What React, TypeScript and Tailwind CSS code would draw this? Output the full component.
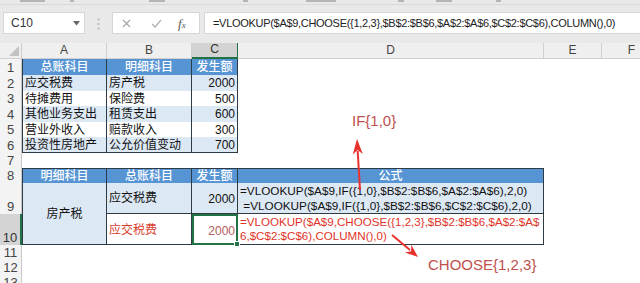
import React from "react";

const F = "font-['Liberation_Sans','Noto_Sans_CJK_SC',sans-serif]";

const colHdr = "flex items-end justify-center pb-[0px] bg-[#efefef] border-b border-r border-[#cfcfcf] text-[12px] leading-[15px] text-[#444]";
const rowHdr = "flex items-end justify-center bg-[#f3f3f3] border-r border-[#c8c8c8] text-[13px] leading-[15px] text-[#444]";
const blueHdr = "flex items-center justify-center bg-[#5694d4] text-white text-[12px] font-medium border-r border-[#2e3b45]";
const empty = "";

const topRows = [
  ["应交税费", "房产税", "2000"],
  ["待摊费用", "保险费", "500"],
  ["其他业务支出", "租赁支出", "600"],
  ["营业外收入", "赔款收入", "300"],
  ["投资性房地产", "公允价值变动", "700"],
];

function RowHead({ n, sel }: { n: number; sel?: boolean }) {
  return (
    <div className={sel ? "flex items-end justify-center bg-[#d4d4d4] border-r-2 border-[#217346] text-[13px] leading-[15px] text-[#333]" : rowHdr}>
      {n}
    </div>
  );
}

export default function App() {
  return (
    <div className={"relative w-[640px] h-[283px] overflow-hidden bg-white " + F}>
      {/* toolbar */}
      <div className="h-[43px] bg-[#e9e9e9] flex flex-col">
        <div className="h-[5px] border-b border-[#d9d9d9] flex items-start gap-0 relative">
          <div className="ml-[20px] mt-[0px] h-[2px] w-[25px] bg-[#b5b5b5]" />
          <div className="ml-[25px] h-[2px] w-[4px] bg-[#b5b5b5]" />
          <div className="ml-[75px] h-[2px] w-[16px] bg-[#b5b5b5]" />
          <div className="ml-[78px] h-[2px] w-[5px] bg-[#b5b5b5]" />
          <div className="ml-[58px] h-[2px] w-[30px] bg-[#b5b5b5]" />
          <div className="ml-[62px] h-[2px] w-[6px] bg-[#b5b5b5]" />
          <div className="ml-[32px] h-[2px] w-[16px] bg-[#b5b5b5]" />
          <div className="ml-[44px] h-[2px] w-[5px] bg-[#b5b5b5]" />
        </div>
        <div className="mt-[7px] h-[23px] flex">
          <div className="ml-[3px] w-[82px] h-[22px] bg-white border border-[#d6d6d6] flex items-center justify-between pl-[7px] pr-[4px]">
            <span className="text-[12px] text-[#333]">C10</span>
            <svg width="7" height="5" viewBox="0 0 7 5"><path d="M0 0 L7 0 L3.5 4.5 Z" fill="#666" /></svg>
          </div>
          <div className="w-[27px] flex items-center justify-center">
            <svg width="3" height="12" viewBox="0 0 3 12">
              <circle cx="1.5" cy="1.5" r="1" fill="#b0b0b0" />
              <circle cx="1.5" cy="6" r="1" fill="#b0b0b0" />
              <circle cx="1.5" cy="10.5" r="1" fill="#b0b0b0" />
            </svg>
          </div>
          <div className="w-[88px] h-[22px] bg-white border border-[#d6d6d6] flex items-center">
            <svg className="ml-[9px]" width="9" height="9" viewBox="0 0 9 9"><path d="M1 1 L8 8 M8 1 L1 8" stroke="#a8a8a8" strokeWidth="1.2" /></svg>
            <svg className="ml-[20px]" width="11" height="9" viewBox="0 0 11 9"><path d="M1 5 L4 8 L10 1" stroke="#b0b0b0" strokeWidth="1.2" fill="none" /></svg>
            <span className="ml-[16px] font-['Liberation_Serif',serif] italic text-[13px] text-[#555] leading-none">f<span className="text-[9px]">x</span></span>
          </div>
          <div className="ml-[4px] flex-1 h-[22px] bg-white border-y border-l border-[#d6d6d6] flex items-center pl-[8px]">
            <span className="text-[11px] tracking-[-0.3px] text-[#222] whitespace-nowrap">=VLOOKUP($A$9,CHOOSE({"{"}1,2,3{"}"},$B$2:$B$6,$A$2:$A$6,$C$2:$C$6),COLUMN(),0)</span>
          </div>
        </div>
      </div>

      {/* sheet grid */}
      <div className="w-[662px] grid grid-cols-[22px_85px_85px_46px_306px_58px_60px] grid-rows-[16px_16px_16px_15px_16px_15px_16px_15px_15px_31px_31px_15px_15px_15px] text-[12px] text-[#111]">
        {/* column headers */}
        <div className="relative bg-[#efefef] border-b border-r border-[#cfcfcf]">
          <svg className="absolute right-[2px] bottom-[2px]" width="10" height="10" viewBox="0 0 10 10"><path d="M10 0 L10 10 L0 10 Z" fill="#c2c2c2" /></svg>
        </div>
        <div className={colHdr}>A</div>
        <div className={colHdr}>B</div>
        <div className="flex items-end justify-center bg-[#d3d3d3] border-b-2 border-[#217346] border-r text-[12px] leading-[15px] text-[#333]">C</div>
        <div className={colHdr}>D</div>
        <div className={colHdr}>E</div>
        <div className={colHdr}>F</div>

        {/* row 1 */}
        <RowHead n={1} />
        <div className={blueHdr + " border-l"}>总账科目</div>
        <div className={blueHdr}>明细科目</div>
        <div className={blueHdr}>发生额</div>
        <div className={empty} />
        <div className={empty} />
        <div className={empty} />

        {topRows.map((r, i) => (
          <React.Fragment key={i}>
            <RowHead n={i + 2} />
            <div className={(i % 2 === 0 ? "bg-[#dde8f5] " : "bg-white ") + (i === 4 ? "border-b " : "") + "flex items-center pl-[2px] border-l border-r border-[#2e3b45] whitespace-nowrap"}>{r[0]}</div>
            <div className={(i % 2 === 0 ? "bg-[#dde8f5] " : "bg-white ") + (i === 4 ? "border-b " : "") + "flex items-center pl-[2px] border-r border-[#2e3b45] whitespace-nowrap"}>{r[1]}</div>
            <div className={(i % 2 === 0 ? "bg-[#dde8f5] " : "bg-white ") + (i === 4 ? "border-b " : "") + "flex items-center justify-end pr-[2px] border-r border-[#2e3b45]"}>{r[2]}</div>
            <div />
            <div />
            <div />
          </React.Fragment>
        ))}

        {/* row 7 */}
        <RowHead n={7} />
        <div />
        <div />
        <div />
        <div />
        <div />
        <div />

        {/* row 8 */}
        <RowHead n={8} />
        <div className={blueHdr + " border-l border-t"}>明细科目</div>
        <div className={blueHdr + " border-t"}>总账科目</div>
        <div className={blueHdr + " border-t"}>发生额</div>
        <div className={blueHdr + " border-t"}>公式</div>
        <div />
        <div />

        {/* row 9 */}
        <RowHead n={9} />
        <div className="row-span-2 bg-[#dde8f5] border-l border-r border-b border-[#2e3b45] flex items-center justify-center">房产税</div>
        <div className="bg-[#dde8f5] border-r border-b border-[#2e3b45] flex items-center pl-[2px]">应交税费</div>
        <div className="bg-[#dde8f5] border-r border-b border-[#2e3b45] flex items-center justify-end pr-[2px] pt-[2px]">2000</div>
        <div className="bg-[#dde8f5] border-r border-b border-[#2e3b45] flex flex-col pl-[2px] pt-[0px] text-[11.75px] leading-[15px] whitespace-pre">
          <span>=VLOOKUP($A$9,IF({"{"}1,0{"}"},$B$2:$B$6,$A$2:$A$6),2,0)</span>
          <span> =VLOOKUP($A$9,IF({"{"}1,0{"}"},$B$2:$B$6,$C$2:$C$6),2,0)</span>
        </div>
        <div />
        <div />

        {/* row 10 */}
        <RowHead n={10} sel />
        <div className="col-start-3 bg-white border-r border-b border-[#2e3b45] flex items-center pl-[2px] pt-[2px] text-[#d8402f]">应交税费</div>
        <div className="relative bg-white border-2 border-[#217346] flex items-center justify-end pr-[1px] pt-[2px] text-[#b45a5a]">
          2000
          <div className="absolute right-[-4px] bottom-[-4px] w-[6px] h-[6px] bg-[#217346] border border-white" />
        </div>
        <div className="bg-white border-r border-b border-[#2e3b45] flex flex-col pl-[2px] pt-[1px] text-[11.6px] leading-[14px] whitespace-pre text-[#de3328]">
          <span>=VLOOKUP($A$9,CHOOSE({"{"}1,2,3{"}"},$B$2:$B$6,$A$2:$A$</span>
          <span>6,$C$2:$C$6),COLUMN(),0)</span>
        </div>
        <div />
        <div />

        {[11, 12, 13].map((n) => (
          <React.Fragment key={n}>
            <RowHead n={n} />
            <div />
            <div />
            <div />
            <div />
            <div />
            <div />
          </React.Fragment>
        ))}
      </div>

      {/* annotations */}
      <div className="absolute left-[352px] top-[112px] text-[15px] leading-[18px] text-[#c0504d] font-light whitespace-nowrap">IF{"{"}1,0{"}"}</div>
      <div className="absolute left-[428px] top-[256px] text-[15px] leading-[18px] text-[#c0504d] font-light whitespace-nowrap">CHOOSE{"{"}1,2,3{"}"}</div>
      <svg className="absolute left-0 top-0 pointer-events-none" width="640" height="283" viewBox="0 0 640 283">
        <line x1="360" y1="190" x2="357.7" y2="151" stroke="#e8322d" strokeWidth="2" />
        <path d="M357 139 L362.8 154 L357.6 150 L352.8 154.5 Z" fill="#e8322d" />
        <line x1="392" y1="235" x2="410" y2="250" stroke="#e8322d" strokeWidth="2" />
        <path d="M418 257 L404.9 252.4 L411.1 251.2 L411.3 244.8 Z" fill="#e8322d" />
      </svg>
    </div>
  );
}
